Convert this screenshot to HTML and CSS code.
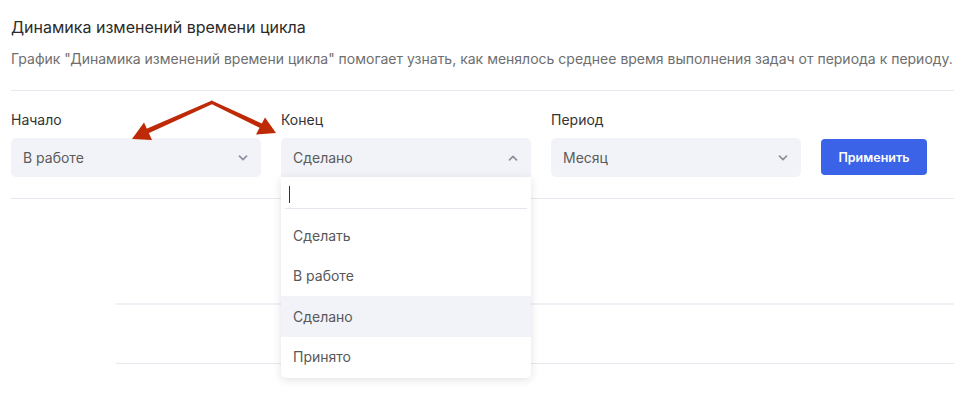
FILE: index.html
```html
<!DOCTYPE html>
<html lang="ru">
<head>
<meta charset="utf-8">
<link rel="stylesheet" href="styles.css">
</head>
<body>
<div class="page">
  <h2 class="title">Динамика изменений времени цикла</h2>
  <p class="desc">График "Динамика изменений времени цикла" помогает узнать, как менялось среднее время выполнения задач от периода к периоду.</p>
  <div class="filters">
    <div class="field">
      <div class="label">Начало</div>
      <div class="select">
        <span>В работе</span>
        <svg class="chev" width="10" height="6" viewBox="0 0 10 6"><path d="M1.5 1.2 L5 4.6 L8.5 1.2" fill="none" stroke="#8b919e" stroke-width="1.7" stroke-linecap="round" stroke-linejoin="round"/></svg>
      </div>
    </div>
    <div class="field open">
      <div class="label">Конец</div>
      <div class="select">
        <span>Сделано</span>
        <svg class="chev" width="10" height="6" viewBox="0 0 10 6"><path d="M1.5 4.8 L5 1.4 L8.5 4.8" fill="none" stroke="#8b919e" stroke-width="1.7" stroke-linecap="round" stroke-linejoin="round"/></svg>
      </div>
      <div class="menu">
        <div class="search"><span class="caret"></span></div>
        <ul class="options">
          <li>Сделать</li>
          <li>В работе</li>
          <li class="active">Сделано</li>
          <li>Принято</li>
        </ul>
      </div>
    </div>
    <div class="field">
      <div class="label">Период</div>
      <div class="select">
        <span>Месяц</span>
        <svg class="chev" width="10" height="6" viewBox="0 0 10 6"><path d="M1.5 1.2 L5 4.6 L8.5 1.2" fill="none" stroke="#8b919e" stroke-width="1.7" stroke-linecap="round" stroke-linejoin="round"/></svg>
      </div>
    </div>
    <button class="apply">Применить</button>
  </div>
  <div class="chart">
    <div class="gridline thick"></div>
    <div class="gridline"></div>
  </div>
</div>
<svg class="arrows" width="976" height="393" viewBox="0 0 976 393">
  <g fill="#bf2a06">
    <polygon points="212,100.5 213.5,103.5 148,133.5 146,129"/>
    <polygon points="132,139 152,140 144,122.5"/>
    <polygon points="211.5,100.5 210.5,103.5 261,128.5 263,124"/>
    <polygon points="276,133 256,134.5 265,117.5"/>
  </g>
</svg>
</body>
</html>
```

FILE: styles.css
```css
* { box-sizing: border-box; }
html, body { margin: 0; padding: 0; background: #fff; }
body {
  font-family: Inter, "Noto Sans", sans-serif;
  color: #333;
  width: 976px;
  height: 393px;
  overflow: hidden;
  position: relative;
}
.page {
  padding: 0 11px;
  width: 965px;
}
.title {
  margin: 17px 0 0;
  font-size: 16px;
  line-height: 20px;
  font-weight: 400;
  color: #2b2b2b;
}
.desc {
  margin: 12px 0 0;
  font-size: 14px;
  line-height: 20px;
  color: #6e6e6e;
  padding-bottom: 21px;
  border-bottom: 1px solid #e8e8f1;
}
.filters {
  display: flex;
  align-items: flex-end;
  gap: 20px;
  padding: 20px 0 21px;
  border-bottom: 1px solid #e8e8f1;
}
.field {
  width: 250px;
  position: relative;
}
.label {
  font-size: 14px;
  line-height: 18px;
  font-weight: 400;
  color: #333;
  margin-bottom: 9px;
}
.select {
  height: 39px;
  background: #f2f3f8;
  border-radius: 5px;
  display: flex;
  align-items: center;
  justify-content: space-between;
  padding: 0 13px 0 12px;
  font-size: 14px;
  color: #5b5b5b;
}
.field.open .select {
  border-radius: 5px 5px 0 0;
}
.chev { display: block; }
.apply {
  width: 106px;
  height: 36px;
  margin-bottom: 2px;
  border: 0;
  border-radius: 4px;
  background: #3a63e7;
  color: #fff;
  font-family: Inter, "Noto Sans", sans-serif;
  font-size: 12.5px;
  font-weight: 600;
  padding: 0;
}
.menu {
  position: absolute;
  left: 0;
  top: 100%;
  width: 250px;
  background: #fff;
  border-radius: 0 0 5px 5px;
  box-shadow: 0 2px 8px rgba(30, 30, 60, 0.13);
  z-index: 2;
  padding: 0 4px 1px;
}
.search {
  height: 32px;
  border-bottom: 1px solid #e6e6ef;
  position: relative;
}
.caret {
  position: absolute;
  left: 4px;
  top: 9px;
  width: 1px;
  height: 17px;
  background: #333;
}
.options {
  list-style: none;
  margin: 7px -4px 0;
  padding: 0;
}
.options li {
  height: 40px;
  line-height: 40px;
  padding-left: 12px;
  font-size: 14px;
  color: #585858;
}
.options li.active {
  background: #f2f3f8;
  height: 41px;
  line-height: 41px;
}
.chart {
  padding-left: 105px;
  padding-top: 104px;
}
.gridline {
  height: 1px;
  background: #e7e7ef;
}
.gridline.thick {
  height: 2px;
  background: #f0f0f7;
  margin-bottom: 58px;
}
.arrows {
  position: absolute;
  left: 0;
  top: 0;
  pointer-events: none;
  z-index: 5;
}
```
